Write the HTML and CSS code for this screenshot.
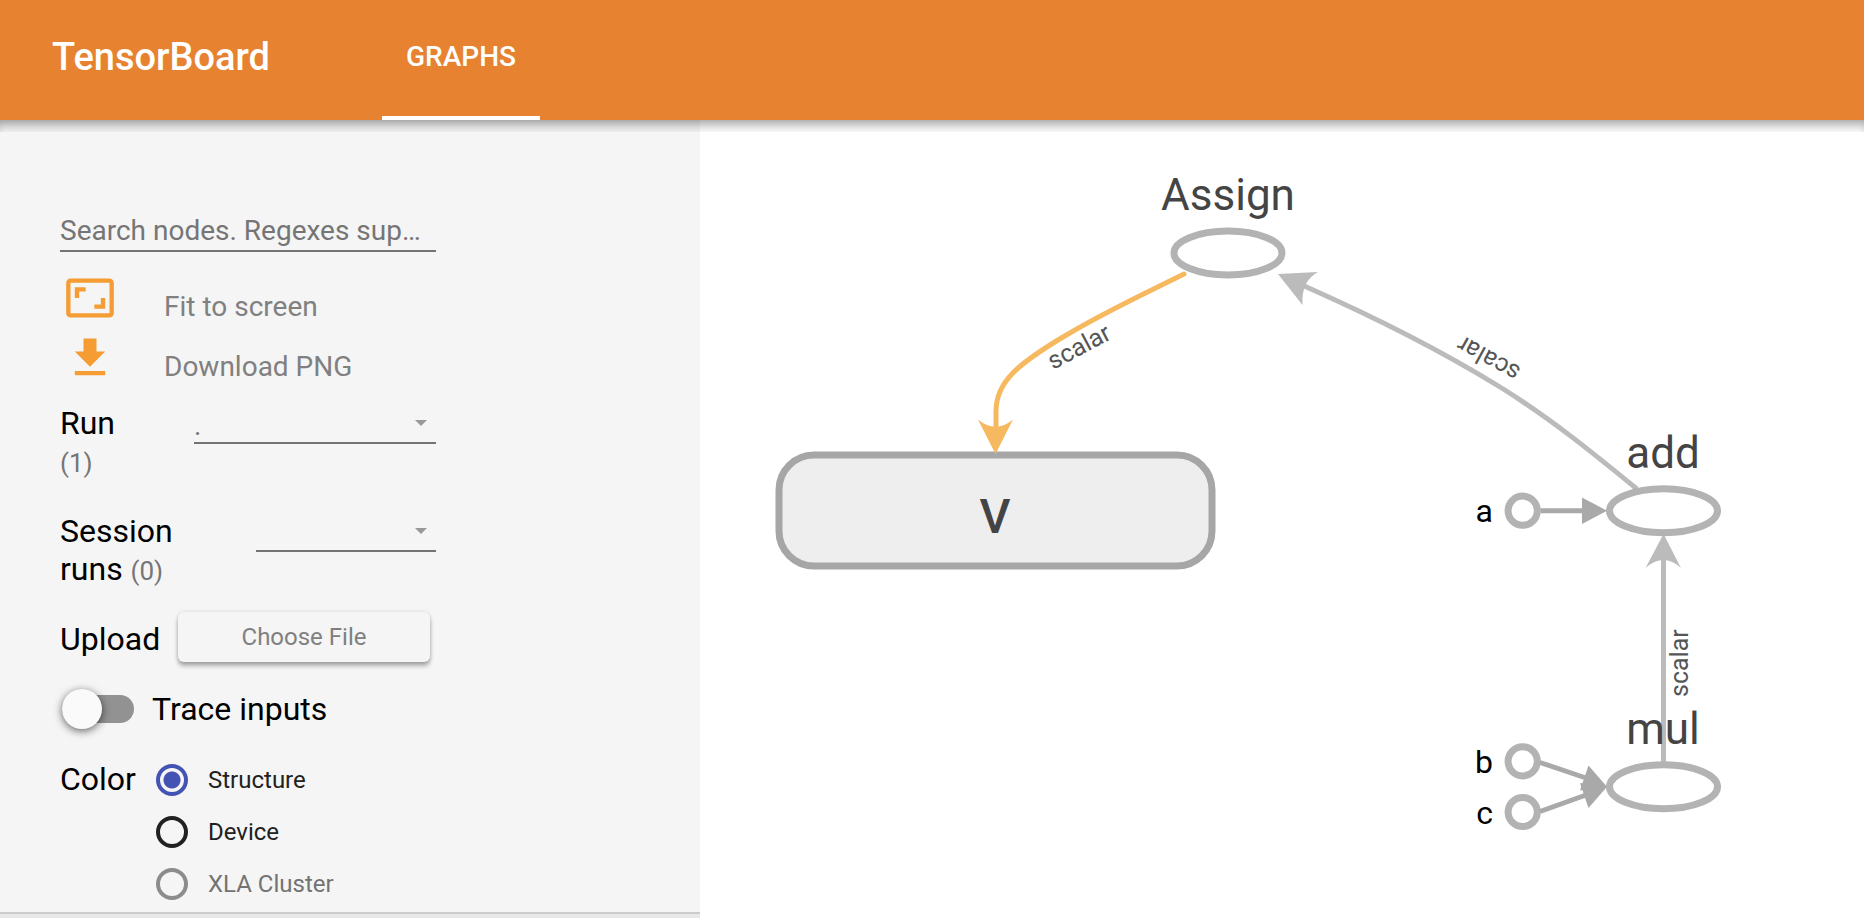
FILE: index.html
```html
<!DOCTYPE html>
<html lang="en">
<head>
<meta charset="utf-8">
<title>TensorBoard</title>
<link rel="stylesheet" href="styles.css">
</head>
<body>
<header class="toolbar">
  <h1 class="brand">TensorBoard</h1>
  <nav class="tabs"><a class="tab" href="#graphs" aria-current="page">GRAPHS</a></nav>
</header>
<div class="content">
  <aside class="sidebar">
    <form class="controls">
      <input class="search" type="text" aria-label="Search nodes" placeholder="Search nodes. Regexes supported.">
      <div class="actions">
        <button class="action" type="button">
          <svg class="action-icon" viewBox="0 0 24 24" aria-hidden="true"><path d="M19 12h-2v3h-3v2h5v-5zM7 9h3V7H5v5h2V9zm14-6H3c-1.100 0-2 .9-2 2v14c0 1.100.9 2 2 2h18c1.100 0 2-.9 2-2V5c0-1.100-.9-2-2-2zm0 16H3V5h18v14z"/></svg>
          <span class="action-label">Fit to screen</span>
        </button>
        <button class="action" type="button">
          <svg class="action-icon" viewBox="0 0 24 24" aria-hidden="true"><path d="M19 9h-4V3H9v6H5l7 7 7-7zM5 18v2h14v-2H5z"/></svg>
          <span class="action-label">Download PNG</span>
        </button>
      </div>
      <div class="row">
        <label class="name" for="run">Run<br><span class="count">(1)</span></label>
        <div class="picker"><select id="run"><option>.</option></select></div>
      </div>
      <div class="row">
        <label class="name" for="session"><span>Session</span> <span>runs</span> <span class="count">(0)</span></label>
        <div class="picker narrow"><select id="session"><option></option></select></div>
      </div>
      <div class="row">
        <span class="title">Upload</span>
        <button class="upload" type="button">Choose File</button>
      </div>
      <label class="row trace"><input class="toggle" type="checkbox">Trace inputs</label>
      <div class="row" role="radiogroup" aria-labelledby="color-title">
        <span class="title color-title" id="color-title">Color</span>
        <div class="options">
          <label class="option"><input type="radio" name="color" checked>Structure</label>
          <label class="option"><input type="radio" name="color">Device</label>
          <label class="option disabled"><input type="radio" name="color" disabled>XLA Cluster</label>
        </div>
      </div>
    </form>
    <div class="legend"></div>
  </aside>
  <main class="graph">
    <svg class="scene" viewBox="700 120 1164 798" role="img" aria-label="Computation graph">
      <g class="node">
        <rect class="group" x="779" y="455" width="433" height="111" rx="35"/>
        <ellipse cx="1228" cy="253" rx="54" ry="22"/>
      </g>
      <g class="edge ref">
        <path d="M1184 274C1150 291 1106 311 1063 337C1018 364 996 382 996 411V430"/>
        <path class="head" d="M995.500 454L978 419.500Q995.500 434 1013 419.500Z"/>
      </g>
      <g class="edge">
        <path d="M1637 489C1593 453 1550 418 1500 387C1440 350 1370 315 1302 285"/>
        <path class="head" d="M1278 274L1318 272Q1301 281 1302.500 305Z"/>
        <path d="M1663.500 762V556"/>
        <path class="head" d="M1663.500 534L1645.500 568Q1663.500 552 1681 568Z"/>
      </g>
      <g class="node">
        <ellipse cx="1663.500" cy="510.700" rx="54" ry="22"/>
        <ellipse cx="1663.500" cy="786.700" rx="54" ry="22"/>
        <circle cx="1522.700" cy="510.700" r="14.600"/>
        <circle cx="1522.700" cy="761.300" r="14.600"/>
        <circle cx="1522.700" cy="812" r="14.600"/>
      </g>
      <g class="edge input">
        <path d="M1540.500 510.700H1585M1540 762.500L1586 778M1540 811.500L1586 795"/>
        <path class="head" d="M1607 510.700L1582 497.500V524Z"/>
        <path class="head" d="M1607 786.700L1588.500 765.500L1580 790.500Z"/>
        <path class="head" d="M1607 786.700L1588.500 808L1580 783Z"/>
      </g>
      <g class="op-label">
        <text x="1228" y="210">Assign</text>
        <text x="1663" y="468">add</text>
        <text x="1663" y="744">mul</text>
        <text class="group-label" x="995" y="533">V</text>
      </g>
      <g class="const-label">
        <text x="1493" y="522">a</text>
        <text x="1493" y="773">b</text>
        <text x="1493" y="824">c</text>
      </g>
      <g class="edge-label">
        <text transform="translate(1053 370) rotate(-28)">scalar</text>
        <text transform="translate(1522 368) rotate(209)">scalar</text>
        <text transform="translate(1688 697) rotate(-90)">scalar</text>
      </g>
    </svg>
  </main>
</div>
</body>
</html>
```
FILE: styles.css
```css
* {
  box-sizing: border-box;
}

body {
  margin: 0;
  min-height: 100vh;
  display: flex;
  flex-direction: column;
  background: #fff;
  color: #000;
  font-family: Roboto, "Liberation Sans", sans-serif;
  font-size: 32px;
  line-height: 38px;
}

button,
input,
select {
  margin: 0;
  padding: 0;
  border: 0;
  border-radius: 0;
  background: none;
  font-family: inherit;
}

.toolbar {
  display: flex;
  background: #e78231;
  color: #fff;
  line-height: 114px;
}

.brand {
  margin: 0;
  width: 382px;
  padding-left: 52px;
  font-size: 38px;
  font-weight: 500;
}

.tab {
  display: block;
  padding: 0 24px 2px;
  border-bottom: 4px solid #fff;
  color: #fff;
  font-size: 28px;
  font-weight: 500;
  text-decoration: none;
}

.content {
  position: relative;
  flex: 1;
  display: flex;
}

/* shadow cast by the toolbar */
.content::before {
  content: "";
  position: absolute;
  inset: 0 0 auto;
  height: 12px;
  box-shadow: inset 0 10px 12px -6px rgba(0, 0, 0, 0.4);
}

.sidebar {
  flex: 0 0 700px;
  display: flex;
  flex-direction: column;
  background: #f5f5f5;
}

.controls {
  width: 436px;
  padding: 94px 0 12px 60px;
  display: flex;
  flex-direction: column;
  gap: 32px;
}

.search {
  width: 100%;
  height: 38px;
  padding-bottom: 4px;
  border-bottom: 2px solid #737373;
  color: #000;
  font-size: 28px;
  text-overflow: ellipsis;
}

.search::placeholder {
  color: #757575;
}

.actions {
  margin: -12px 0 -20px;
}

.action {
  display: flex;
  align-items: flex-start;
  gap: 48px;
  height: 60px;
  padding-left: 4px;
  color: #808080;
  font-size: 28px;
  line-height: 34px;
}

.action-icon {
  width: 52px;
  height: 52px;
  fill: #f59c33;
}

.action-label {
  padding-top: 18px;
}

.row {
  display: flex;
  align-items: flex-start;
}

.name {
  width: 134px;
}

.count {
  color: #757575;
  font-size: 26px;
  line-height: 32px;
}

.picker {
  position: relative;
  width: 242px;
  margin-left: auto;
}

.picker.narrow {
  width: 180px;
}

.picker select {
  display: block;
  width: 100%;
  height: 40px;
  padding-top: 4px;
  border-bottom: 2px solid #737373;
  appearance: none;
  color: #757575;
  font-size: 28px;
}

.picker::after {
  content: "";
  position: absolute;
  top: 16px;
  right: 9px;
  border: 6px solid transparent;
  border-top-color: #999;
  border-bottom-width: 0;
  pointer-events: none;
}

.upload {
  width: 252px;
  height: 50px;
  margin: -8px 6px -4px auto;
  border-radius: 6px;
  background: #f5f5f5;
  box-shadow: 0 4px 4px rgba(0, 0, 0, 0.3), 0 0 4px rgba(0, 0, 0, 0.12);
  color: #808080;
  font-size: 24px;
}

.trace {
  align-items: center;
  gap: 18px;
}

.toggle {
  position: relative;
  width: 72px;
  height: 28px;
  margin-left: 2px;
  border-radius: 14px;
  appearance: none;
  background: #929292;
}

.toggle::before {
  content: "";
  position: absolute;
  top: -6px;
  left: 0;
  width: 40px;
  height: 40px;
  border-radius: 50%;
  background: #fafafa;
  box-shadow: 0 2px 8px rgba(0, 0, 0, 0.6);
}

.toggle:checked::before {
  left: 32px;
}

.color-title {
  width: 96px;
}

.options {
  display: flex;
  flex-direction: column;
  gap: 20px;
  padding-top: 4px;
}

.option {
  display: flex;
  align-items: center;
  gap: 20px;
  color: #212121;
  font-size: 24px;
  line-height: 32px;
}

.option input {
  width: 32px;
  height: 32px;
  border: 4px solid #212121;
  border-radius: 50%;
  appearance: none;
}

.option input:checked {
  border-color: #4353b3;
  background: radial-gradient(circle, #4353b3 8px, transparent 9px);
}

.option.disabled {
  color: #737373;
}

.option.disabled input {
  border-color: #8c8c8c;
}

.legend {
  height: 6px;
  margin-top: auto;
  border-top: 2px solid #ccc;
  background: #e8e8e8;
}

.graph {
  flex: 1;
  min-width: 0;
  display: flex;
}

.scene {
  flex: 1;
  min-width: 0;
}

.node {
  fill: #fff;
  stroke: #b3b3b3;
  stroke-width: 7px;
}

.group {
  fill: #eee;
  stroke: #a6a6a6;
}

.edge {
  fill: none;
  stroke: #bbb;
  stroke-width: 5px;
}

.edge .head {
  fill: #bbb;
  stroke: none;
}

.edge.ref {
  stroke: #f6b960;
  stroke-linecap: round;
}

.ref .head {
  fill: #f6b960;
}

.edge.input {
  stroke: #a9a9a9;
}

.input .head {
  fill: #a9a9a9;
}

.op-label {
  fill: #444;
  font-size: 44px;
  text-anchor: middle;
}

.group-label {
  font-size: 48px;
  font-weight: 500;
}

.const-label {
  font-size: 32px;
  text-anchor: end;
}

.edge-label {
  fill: #555;
  font-size: 25px;
}
```
